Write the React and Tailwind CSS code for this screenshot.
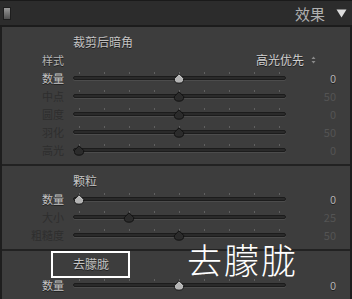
import React from "react";

const FONT = { fontFamily: '"Noto Sans CJK SC", "Noto Sans", sans-serif' };
const TICKS = [0, 1, 2, 3, 4, 5, 6, 7, 8];

function Thumb({ active }) {
  return (
    <svg width="12" height="11" viewBox="0 0 12 11" className="block">
      <path
        d="M6 0.8 L10.6 5.4 Q11.3 10.2 6 10.2 Q0.7 10.2 1.4 5.4 Z"
        fill={active ? "#b4b4b4" : "#2b2b2b"}
        stroke="#121212"
        strokeWidth="1"
      />
      {active && <path d="M6 1.8 L9.6 5.4" stroke="#d8d8d8" strokeWidth="0.8" fill="none" />}
    </svg>
  );
}

function Slider({ frac, active }) {
  return (
    <div className="relative w-[213px] h-[18px]">
      {TICKS.map((i) => (
        <div
          key={i}
          className="absolute top-[3px] w-px h-[2px] bg-[#606060]"
          style={{ left: 6 + i * 25 }}
        />
      ))}
      <div className="absolute left-0 right-0 top-[7px] h-[4px] rounded-full bg-[#2a2a2a] border border-[#1c1c1c] shadow-[0_1px_0_#4c4c4c]" />
      <div className="absolute top-[4px]" style={{ left: 6 + frac * 200 - 6 }}>
        <Thumb active={active} />
      </div>
    </div>
  );
}

function Row({ label, frac, value, active }) {
  return (
    <div className="flex items-center h-[18px]">
      <div
        className={`w-[62px] text-right text-[11px] leading-none ${
          active ? "text-[#c4c4c4] [text-shadow:0_1px_0_#1c1c1c]" : "text-[#2e2e2e]"
        }`}
      >
        {label}
      </div>
      <div className="w-[9px]" />
      <Slider frac={frac} active={active} />
      <div
        className={`w-[50px] text-right text-[11px] leading-none ${
          active ? "text-[#b4b4b4] [text-shadow:0_1px_0_#1c1c1c]" : "text-[#545454]"
        }`}
      >
        {value}
      </div>
    </div>
  );
}

function Title({ children }) {
  return (
    <div className="h-[18px] flex items-center pl-[71px] text-[12px] leading-none text-[#c4c4c4] [text-shadow:0_1px_0_#1c1c1c]">
      {children}
    </div>
  );
}

export default function App() {
  return (
    <div className="relative w-[352px] h-[299px] overflow-hidden bg-[#2b2b2b]" style={FONT}>
      {/* header */}
      <div className="h-[27px] border-t border-[#1a1a1a] border-b-2 border-b-[#1c1c1c] flex items-center bg-[#2c2c2c]">
        <div className="ml-[3px] w-[8px] h-[13px] border border-[#1e1e1e] bg-gradient-to-b from-[#9a9a9a] to-[#505050]" />
        <div className="flex-1" />
        <div className="text-[15px] leading-none text-[#b0b0b0]">效果</div>
        <svg width="11" height="9" viewBox="0 0 11 9" className="ml-[11px] mr-[5px]">
          <path d="M0.5 0.5 L10.5 0.5 L5.5 8.5 Z" fill="#dcdcdc" />
        </svg>
      </div>

      {/* panel */}
      <div className="h-[272px] bg-[#3d3d3d] border-l-2 border-r-2 border-[#1e1e1e]">
        <div className="pt-[6px] pb-[5px]">
          <Title>裁剪后暗角</Title>
          <div className="flex items-center h-[18px]">
            <div className="w-[62px] text-right text-[11px] leading-none text-[#b4b4b4] [text-shadow:0_1px_0_#1c1c1c]">
              样式
            </div>
            <div className="flex-1" />
            <div className="flex items-center mr-[34px]">
              <span className="text-[12px] leading-none text-[#d2d2d2] [text-shadow:0_1px_0_#1c1c1c]">高光优先</span>
              <svg width="5" height="8" viewBox="0 0 5 8" className="ml-[7px]">
                <path d="M2.5 0.5 L4.5 3 L0.5 3 Z M2.5 7.5 L4.5 5 L0.5 5 Z" fill="#8a8a8a" />
              </svg>
            </div>
          </div>
          <Row label="数量" frac={0.5} value="0" active />
          <Row label="中点" frac={0.5} value="50" />
          <Row label="圆度" frac={0.5} value="0" />
          <Row label="羽化" frac={0.5} value="50" />
          <Row label="高光" frac={0} value="0" />
        </div>
        <div className="h-[2px] bg-[#222222]" />
        <div className="pt-[6px] pb-[5px]">
          <Title>颗粒</Title>
          <Row label="数量" frac={0} value="0" active />
          <Row label="大小" frac={0.25} value="25" />
          <Row label="粗糙度" frac={0.5} value="50" />
        </div>
        <div className="h-[2px] bg-[#222222]" />
        <div className="pt-[4px]">
          <Title>去朦胧</Title>
          <div className="h-[3px]" />
          <Row label="数量" frac={0.5} value="0" active />
        </div>
      </div>

      {/* annotations */}
      <div className="absolute left-[51px] top-[251px] w-[79px] h-[27px] border-2 border-white" />
      <div className="absolute left-[187px] top-[241px] text-[35px] leading-none font-light tracking-[2px] text-white" style={FONT}>
        去朦胧
      </div>
    </div>
  );
}
